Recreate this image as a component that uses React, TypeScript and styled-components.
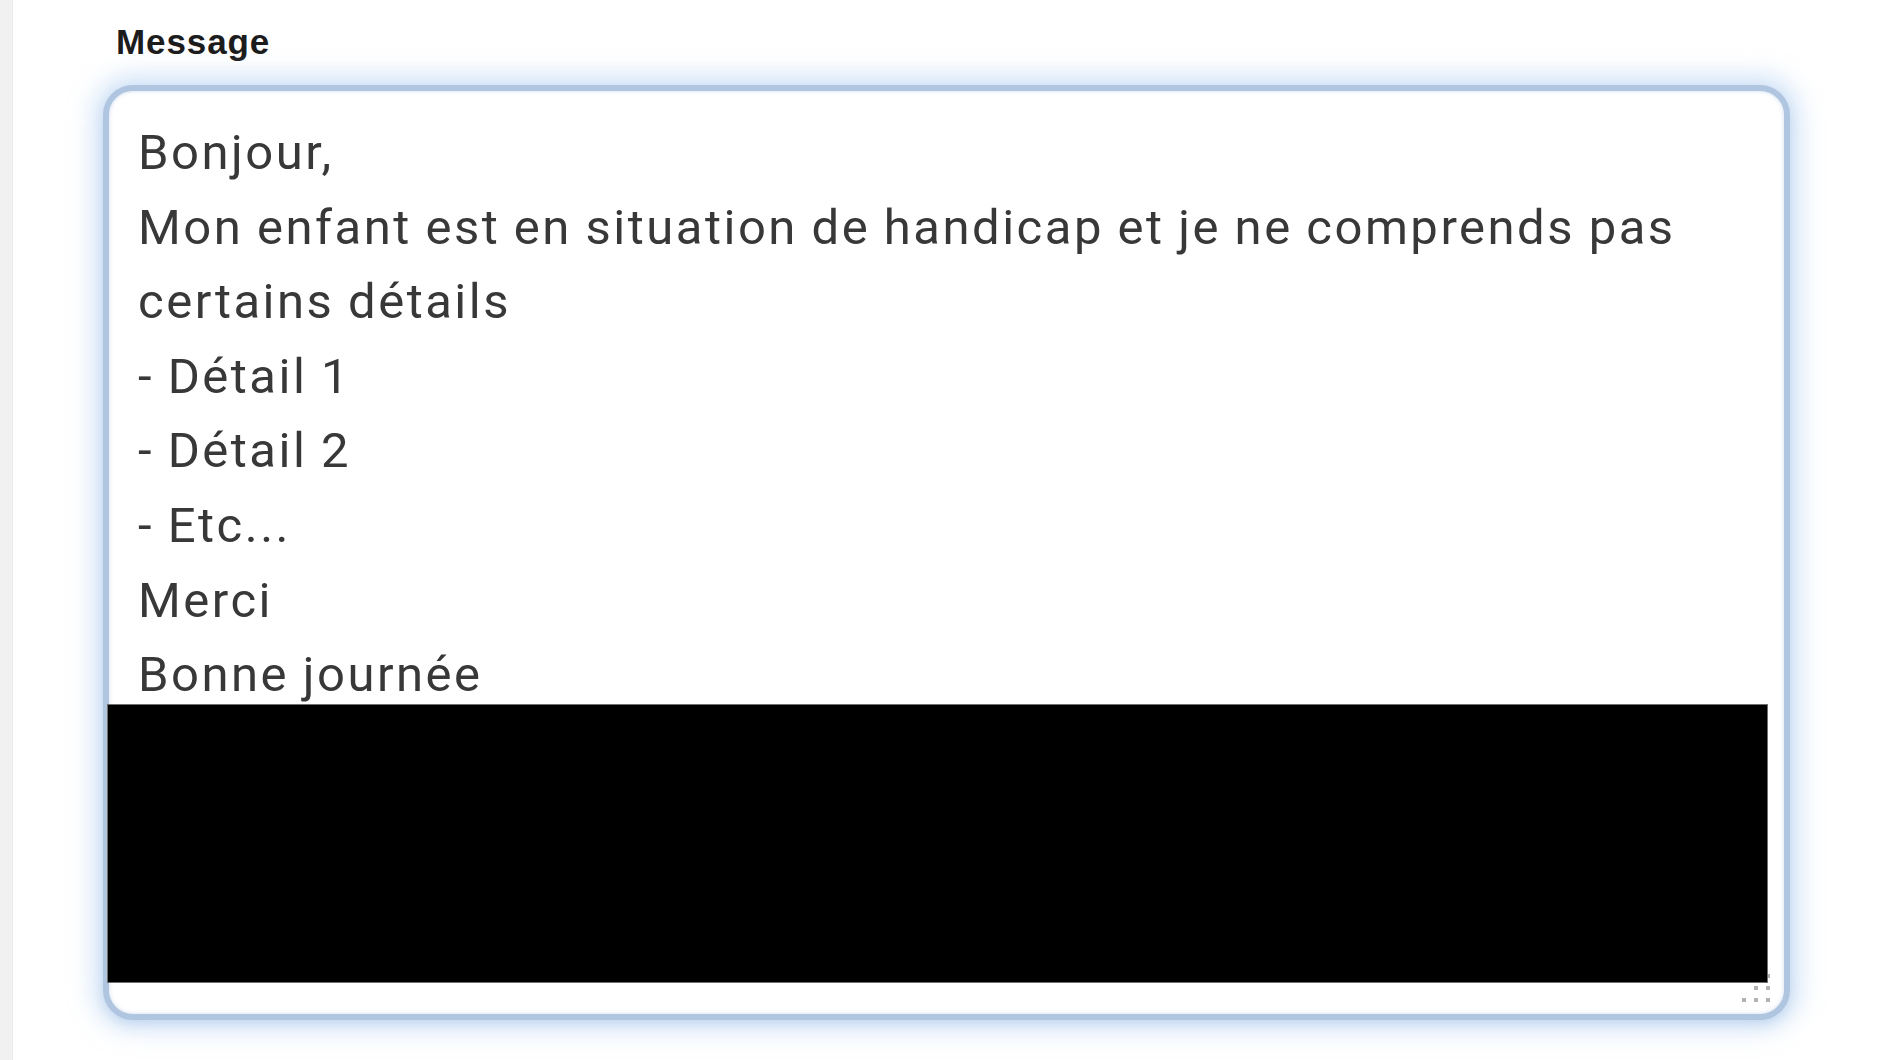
import React from 'react';
import styled, { createGlobalStyle } from 'styled-components';

// --- GLOBAL ---
const GlobalStyle = createGlobalStyle`
  html, body {
    margin: 0;
    padding: 0;
    background: #ffffff;
  }
  * {
    box-sizing: border-box;
  }
`;

// --- STYLED COMPONENTS ---
const Page = styled.div`
  display: flex;
  min-height: 100vh;
  background: #ffffff;
`;

const SideStrip = styled.div`
  width: 13px;
  flex-shrink: 0;
  background: #f1f1f1;
  border-right: 1px solid #ececec;
`;

const Main = styled.main`
  flex: 1;
  padding: 22px 0 0 90px;
`;

const Field = styled.div`
  display: flex;
  flex-direction: column;
  width: 1687px;
`;

const Label = styled.label`
  margin-left: 13px;
  font-family: 'Liberation Sans', Arial, sans-serif;
  font-weight: 700;
  font-size: 35px;
  line-height: 40px;
  letter-spacing: 0.9px;
  color: #1c1c1c;
`;

const TextBox = styled.div`
  position: relative;
  margin-top: 23px;
  height: 935px;
  padding: 25px 30px 0 29px;
  background: #ffffff;
  border: 6px solid #b0c5df;
  border-radius: 30px;
  box-shadow: 0 0 24px 9px rgba(170, 202, 240, 0.55), 0 4px 10px rgba(140, 170, 210, 0.3),
    inset 0 0 4px rgba(150, 180, 220, 0.45);
  font-family: Roboto, 'Noto Sans', sans-serif;
  font-size: 49px;
  line-height: 74.6px;
  letter-spacing: 2.5px;
  word-spacing: -1px;
  color: #383838;
  white-space: pre-wrap;
`;

const Redaction = styled.div`
  position: absolute;
  left: -2px;
  right: 16px;
  top: 613px;
  height: 279px;
  background: #000000;
  border: 1px solid #6f6f6f;
`;

const Grip = styled.svg`
  position: absolute;
  right: 12px;
  bottom: 12px;
  width: 30px;
  height: 30px;
`;

// --- COMPONENT ---
const message = [
  'Bonjour,',
  'Mon enfant est en situation de handicap et je ne comprends pas certains détails',
  '- Détail 1',
  '- Détail 2',
  '- Etc...',
  'Merci',
  'Bonne journée',
].join('\n');

const gripDots = [
  [26, 4],
  [14, 16],
  [26, 16],
  [2, 28],
  [14, 28],
  [26, 28],
];

const App: React.FC = () => {
  return (
    <>
      <GlobalStyle />
      <Page>
        <SideStrip />
        <Main>
          <Field>
            <Label>Message</Label>
            <TextBox role="textbox" aria-multiline="true" aria-label="Message">
              {message}
              <Grip viewBox="0 0 30 30">
                {gripDots.map(([x, y]) => (
                  <rect key={`${x}-${y}`} x={x - 2} y={y - 2} width="4" height="4" fill="#b3b3b3" />
                ))}
              </Grip>
              <Redaction />
            </TextBox>
          </Field>
        </Main>
      </Page>
    </>
  );
};

export default App;
